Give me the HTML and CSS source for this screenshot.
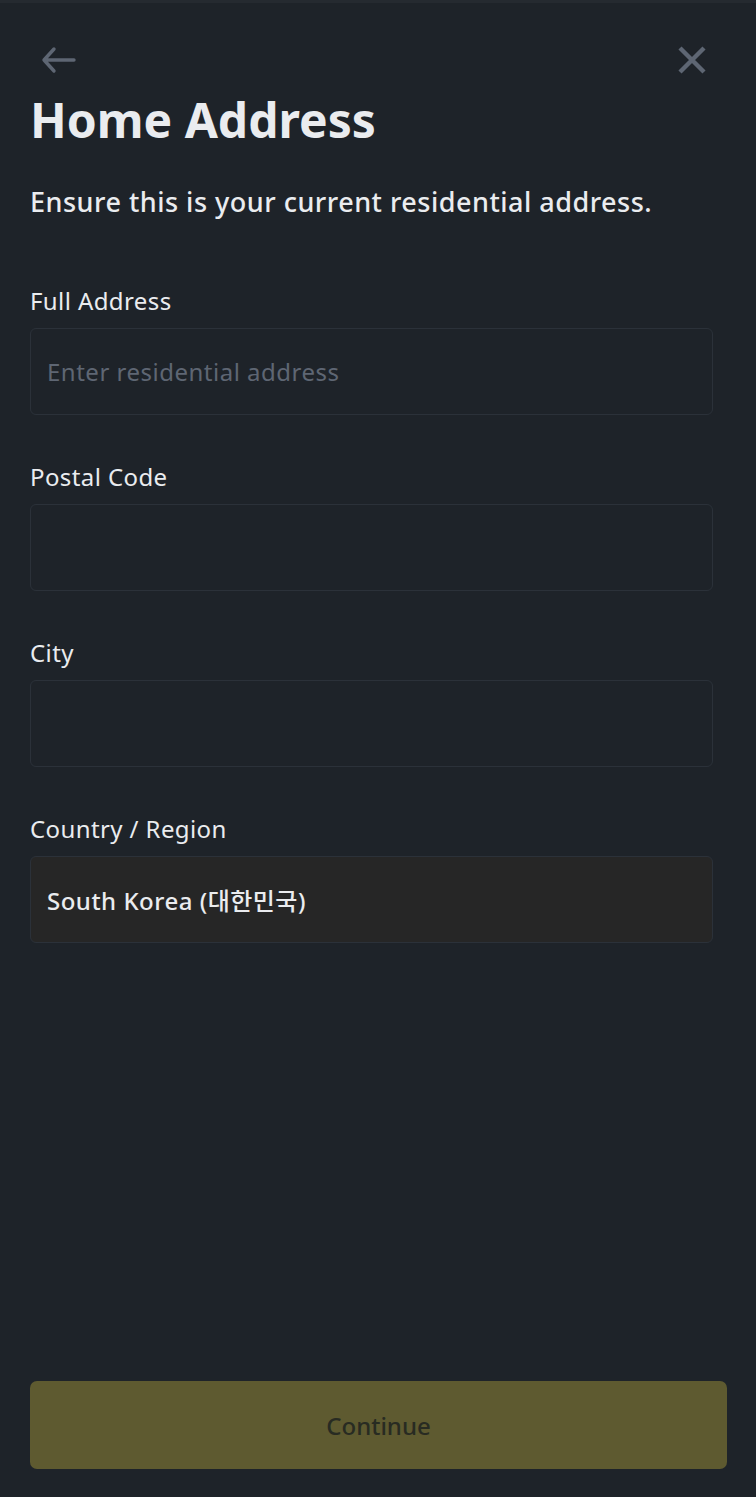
FILE: index.html
```html
<!DOCTYPE html>
<html lang="en">
<head>
  <meta charset="UTF-8" />
  <title>Home Address</title>
  <meta name="viewport" content="width=device-width, initial-scale=1.0" />
  <link rel="stylesheet" href="styles.css">
</head>
<body>

<div class="page">
  <div class="topbar">
    <button class="icon-btn back" aria-label="Back">
      <svg width="36" height="28" viewBox="0 0 36 28" fill="none" stroke="#5e6673" stroke-width="3.4" stroke-linecap="round" stroke-linejoin="round">
        <path d="M33 14H3M13 3L3 14l10 11"/>
      </svg>
    </button>
    <button class="icon-btn close" aria-label="Close">
      <svg width="28" height="28" viewBox="0 0 28 28" fill="none" stroke="#5e6673" stroke-width="4.4">
        <path d="M2 2l24 24M26 2L2 26"/>
      </svg>
    </button>
  </div>

  <h1>Home Address</h1>
  <p class="sub">Ensure this is your current residential address.</p>

  <form class="form">
    <div class="field">
      <label>Full Address</label>
      <div class="input"><span class="placeholder">Enter residential address</span></div>
    </div>
    <div class="field">
      <label>Postal Code</label>
      <div class="input"></div>
    </div>
    <div class="field">
      <label>City</label>
      <div class="input"></div>
    </div>
    <div class="field">
      <label>Country / Region</label>
      <div class="input select"><span class="value">South Korea (대한민국)</span></div>
    </div>
  </form>

  <div class="footer">
    <button class="continue" disabled>Continue</button>
  </div>
</div>

</body>
</html>
```

FILE: styles.css
```css
* { box-sizing: border-box; margin: 0; padding: 0; }
body {
  font-family: "Noto Sans", "Noto Sans CJK KR", sans-serif;
  background: #1e2329;
  color: #eaecef;
  min-height: 100vh;
}
.page {
  display: flex;
  flex-direction: column;
  min-height: 1497px;
  padding: 0 29px 0 30px;
  border-top: 3px solid #252a30;
}
.topbar {
  display: flex;
  justify-content: space-between;
  align-items: center;
  height: 56px;
  margin-top: 29px;
}
.icon-btn {
  background: none;
  border: none;
  display: flex;
  align-items: center;
  cursor: pointer;
}
.back { margin-left: 11px; }
.close { margin-right: 21px; }
h1 {
  font-size: 48px;
  font-weight: 700;
  line-height: 64px;
  color: #eaecef;
}
.sub {
  font-size: 27px;
  font-weight: 500;
  letter-spacing: 0.5px;
  line-height: 36px;
  margin-top: 32px;
  color: #eaecef;
}
.form {
  display: flex;
  flex-direction: column;
  gap: 47px;
  margin-top: 66px;
}
.field label {
  display: block;
  font-size: 24px;
  letter-spacing: 0.4px;
  line-height: 30px;
  margin-bottom: 12px;
  color: #eaecef;
}
.input {
  width: 683px;
  height: 87px;
  border: 1.5px solid #2b3139;
  border-radius: 6px;
  display: flex;
  align-items: center;
  padding: 0 16px;
  font-size: 24px;
  letter-spacing: 0.5px;
}
.placeholder { color: #5e6673; }
.select {
  background: #262626;
}
.value {
  font-weight: 500;
  color: #eaecef;
}
.footer {
  margin-top: auto;
  padding-bottom: 28px;
}
.continue {
  width: 697px;
  height: 88px;
  border: none;
  border-radius: 7px;
  background: #5e5a30;
  color: #282b22;
  font-family: inherit;
  font-size: 24px;
  font-weight: 500;
}
```
